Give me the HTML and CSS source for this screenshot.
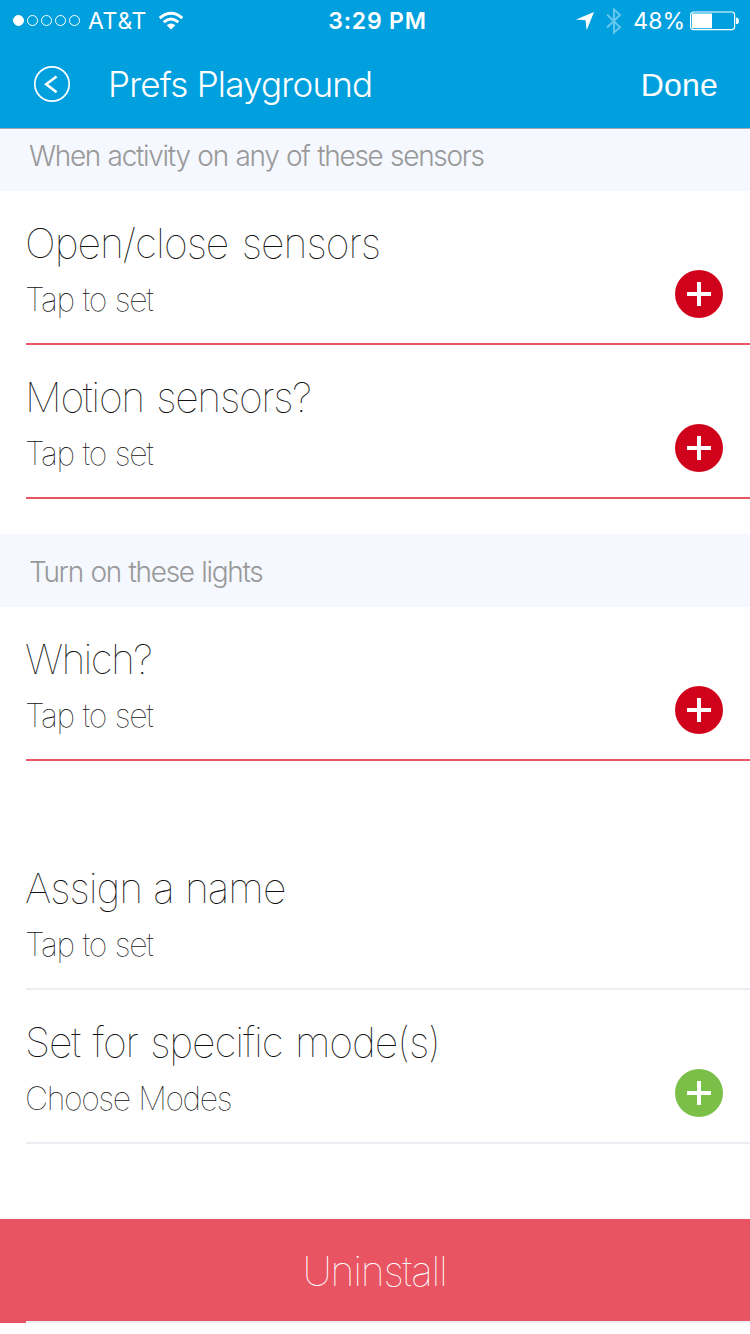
FILE: index.html
```
<!DOCTYPE html>
<html lang="en">
<head>
<meta charset="utf-8">
<title>Prefs Playground</title>
<link rel="stylesheet" href="styles.css">
</head>
<body>
<header class="header">
  <div class="status">
    <div class="status-left">
      <svg class="signal" width="70" height="14" viewBox="0 0 70 14" fill="none" stroke="#fff" stroke-width="1"><circle cx="6.5" cy="6.5" r="5" fill="#fff"/><circle cx="20.5" cy="6.5" r="5"/><circle cx="34.5" cy="6.5" r="5"/><circle cx="48.5" cy="6.5" r="5"/><circle cx="62.5" cy="6.5" r="5"/></svg>
      <span class="carrier">AT&amp;T</span>
      <svg class="wifi" width="26" height="20" viewBox="0 0 26 20" fill="none" stroke="#fff" stroke-width="3"><path d="M1.7 7.1Q13-2.7 24.3 7.1"/><path d="M5.7 11.2Q13 4.9 20.3 11.2"/><path d="M13 18.6L8.6 14.2Q13 10.8 17.4 14.2Z" fill="#fff" stroke="none"/></svg>
    </div>
    <span class="clock">3:29 PM</span>
    <div class="status-right">
      <svg class="location" width="18" height="19" viewBox="0 0 18 19" fill="#fff"><path d="M18 0L10.7 18.3L9.5 8.3L0 7.4Z"/></svg>
      <svg class="bluetooth" width="16" height="28" viewBox="0 0 16 28" fill="none" stroke="#66c6ec" stroke-width="2"><path d="M1 7.5L14 20.2L8 25.5V2.5L14 8L1 20.5"/></svg>
      <span class="percent">48%</span>
      <svg class="battery" width="50" height="20" viewBox="0 0 50 20"><rect x=".6" y="1" width="44" height="17.6" rx="2.8" fill="none" stroke="#fff" stroke-width="1.2"/><path d="M2 2.5H22V17.2H2Z" fill="#fff"/><path d="M46 6.5Q49 6.5 49 10Q49 13.3 46 13.3Z" fill="#fff"/></svg>
    </div>
  </div>
  <div class="nav">
    <svg class="back" width="38" height="38" viewBox="0 0 38 38" fill="none" stroke="#fff"><circle cx="19" cy="19" r="17.2" stroke-width="1.7"/><path d="M23.6 11.5L13.2 19.3L23.6 27.2" stroke-width="2.6"/></svg>
    <h1 class="title">Prefs Playground</h1>
    <span class="done">Done</span>
  </div>
</header>
<main>
  <h2 class="section first">When activity on any of these sensors</h2>
  <div class="row required">
    <div class="text"><div class="name n1">Open/close sensors</div><div class="hint">Tap to set</div></div>
    <svg class="plus" width="48" height="48" viewBox="0 0 48 48"><circle cx="24" cy="24" r="24"/><path d="M12 24H36M24 12V36"/></svg>
  </div>
  <div class="row required">
    <div class="text"><div class="name n2">Motion sensors?</div><div class="hint">Tap to set</div></div>
    <svg class="plus" width="48" height="48" viewBox="0 0 48 48"><circle cx="24" cy="24" r="24"/><path d="M12 24H36M24 12V36"/></svg>
  </div>
  <h2 class="section second">Turn on these lights</h2>
  <div class="row required">
    <div class="text"><div class="name n3">Which?</div><div class="hint">Tap to set</div></div>
    <svg class="plus" width="48" height="48" viewBox="0 0 48 48"><circle cx="24" cy="24" r="24"/><path d="M12 24H36M24 12V36"/></svg>
  </div>
  <div class="row optional spaced">
    <div class="text"><div class="name n4">Assign a name</div><div class="hint">Tap to set</div></div>
  </div>
  <div class="row optional">
    <div class="text"><div class="name">Set for specific mode(s)</div><div class="hint modes">Choose Modes</div></div>
    <svg class="plus" width="48" height="48" viewBox="0 0 48 48"><circle cx="24" cy="24" r="24"/><path d="M12 24H36M24 12V36"/></svg>
  </div>
  <div class="uninstall"><span class="uninstall-label">Uninstall</span><div class="rule"></div></div>
</main>
</body>
</html>
```
FILE: styles.css
```
* { box-sizing: border-box; }
body { margin: 0; width: 750px; height: 1334px; overflow: hidden; background: #fff; font-family: Inter, "Liberation Sans", sans-serif; white-space: nowrap; }
h1, h2 { margin: 0; font-weight: 200; }
svg { display: block; flex: none; }
.header { height: 129px; background: #009fdd; border-bottom: 1px solid #a3a9b3; color: #fff; }
.status { display: grid; grid-template-columns: 1fr auto 1fr; height: 41px; padding: 1px 12px 0; align-items: center; font-size: 23px; line-height: 28px; }
.status-left, .status-right { display: flex; align-items: center; }
.status-right { justify-content: flex-end; }
.carrier { margin-left: 6px; letter-spacing: .7px; }
.wifi { margin-left: 11px; }
.clock { font-weight: 600; letter-spacing: .8px; padding-left: 5px; }
.bluetooth { margin-left: 12px; }
.percent { margin: 0 5px 0 11px; }
.status-right .battery { margin-right: -2px; }
.nav { display: flex; align-items: center; height: 86px; padding: 0 32px 0 33px; }
.title { margin-left: 37px; font-size: 35px; line-height: 44px; font-weight: 300; letter-spacing: -.8px; }
.done { margin-left: auto; font: 32px/44px "Liberation Sans", sans-serif; letter-spacing: .2px; padding-top: 1px; }
.section { background: #f5f8ff; color: #999; font-size: 28px; line-height: 34px; font-weight: 300; padding-left: 29px; letter-spacing: -1.3px; word-spacing: 1px; }
.first { height: 62px; padding-top: 10px; }
.second { height: 73px; margin-top: 35px; padding-top: 21px; }
.row { display: flex; height: 154px; margin-left: 26px; padding-right: 27px; border-bottom: 2px solid #e95462; }
.optional { border-color: #ebeef2; }
.spaced { margin-top: 75px; }
.text { flex: 1; padding-top: 27px; margin-left: -1px; }
.name { font-size: 41px; line-height: 50px; font-weight: 100; color: #111; letter-spacing: -1.1px; word-spacing: 2px; }
.n1 { letter-spacing: -1px; word-spacing: 3px; }
.n2 { letter-spacing: -1.3px; }
.n3 { letter-spacing: -1.7px; }
.n4 { letter-spacing: -1px; word-spacing: .5px; }
.hint { margin-top: 12px; font-size: 32px; line-height: 40px; font-weight: 100; color: #111; letter-spacing: -1.3px; word-spacing: 1px; }
.modes { letter-spacing: -1.4px; }
.plus { margin-top: 79px; fill: #d0021b; }
.plus path { stroke: #fff; stroke-width: 4; }
.optional .plus { fill: #7abf48; }
.uninstall { margin-top: 75px; height: 104px; display: flex; flex-direction: column; align-items: center; padding-top: 27px; background: #e95462; color: #fff; }
.uninstall-label { font-size: 41px; line-height: 50px; font-weight: 100; letter-spacing: -1.3px; padding-right: 1px; }
.rule { align-self: stretch; height: 2px; margin: auto 0 0 26px; background: #ebeef2; }
```
